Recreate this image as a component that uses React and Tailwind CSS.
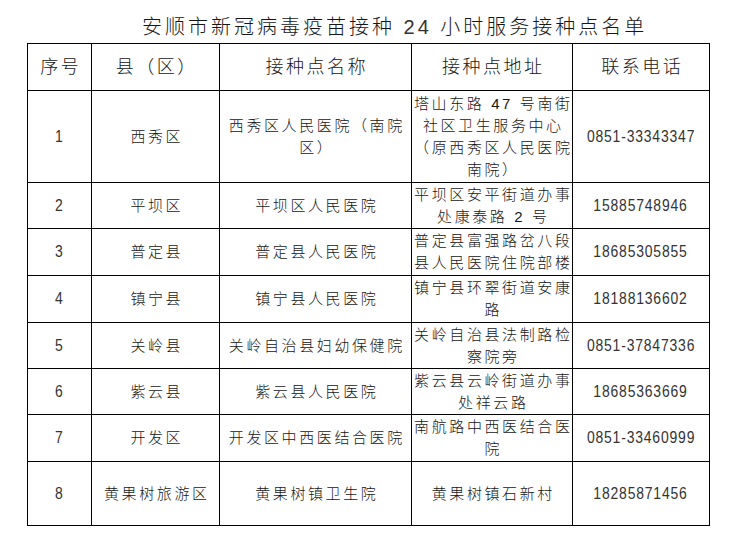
import React from "react";

const rows = [
  { n: "1", county: ["西秀区"], site: ["西秀区人民医院（南院", "区）"], addr: ["塔山东路 47 号南街", "社区卫生服务中心", "（原西秀区人民医院", "南院）"], tel: "0851-33343347" },
  { n: "2", county: ["平坝区"], site: ["平坝区人民医院"], addr: ["平坝区安平街道办事", "处康泰路 2 号"], tel: "15885748946" },
  { n: "3", county: ["普定县"], site: ["普定县人民医院"], addr: ["普定县富强路岔八段", "县人民医院住院部楼"], tel: "18685305855" },
  { n: "4", county: ["镇宁县"], site: ["镇宁县人民医院"], addr: ["镇宁县环翠街道安康", "路"], tel: "18188136602" },
  { n: "5", county: ["关岭县"], site: ["关岭自治县妇幼保健院"], addr: ["关岭自治县法制路检", "察院旁"], tel: "0851-37847336" },
  { n: "6", county: ["紫云县"], site: ["紫云县人民医院"], addr: ["紫云县云岭街道办事", "处祥云路"], tel: "18685363669" },
  { n: "7", county: ["开发区"], site: ["开发区中西医结合医院"], addr: ["南航路中西医结合医", "院"], tel: "0851-33460999" },
  { n: "8", county: ["黄果树旅游区"], site: ["黄果树镇卫生院"], addr: ["黄果树镇石新村"], tel: "18285871456" },
];

const cell = "flex flex-col items-center justify-center text-center border-r border-b border-black";

function Lines({ lines }) {
  return lines.map((l, i) => (
    <div key={i} className="whitespace-nowrap leading-[22px] text-[15px] tracking-[2.6px] pl-[2.6px]">
      {l}
    </div>
  ));
}

function Num({ v }) {
  return (
    <span className="inline-block scale-x-[0.82] text-[17px] tracking-[1px] leading-[22px] whitespace-nowrap text-[#333]">
      {v}
    </span>
  );
}

function Head({ t }) {
  return <div className="whitespace-nowrap text-[18px] tracking-[2.5px] pl-[2.5px] leading-[24px]">{t}</div>;
}

export default function App() {
  return (
    <div className="w-[740px] h-[554px] bg-white text-[#161616] font-['Liberation_Sans','Noto_Sans_CJK_SC',sans-serif] font-light">
      <div className="h-[43px] pt-[15px] pl-[142px]">
        <div className="whitespace-nowrap text-[20px] leading-[24px] tracking-[3px]">
          安顺市新冠病毒疫苗接种<span className="text-[#333]"> 24 </span>小时服务接种点名单
        </div>
      </div>
      <div className="ml-[27px] w-[683px] grid grid-cols-[64px_128px_192px_161px_137px] grid-rows-[47px_92px_46px_47px_47px_46px_46px_47px_64px] border-l border-t border-black">
        <div className={cell}><Head t="序号" /></div>
        <div className={cell}><Head t="县（区）" /></div>
        <div className={cell}><Head t="接种点名称" /></div>
        <div className={cell}><Head t="接种点地址" /></div>
        <div className={cell}><Head t="联系电话" /></div>
        {rows.map((r) => (
          <React.Fragment key={r.n}>
            <div className={cell}><Num v={r.n} /></div>
            <div className={cell}><Lines lines={r.county} /></div>
            <div className={cell}><Lines lines={r.site} /></div>
            <div className={cell}><Lines lines={r.addr} /></div>
            <div className={cell}><Num v={r.tel} /></div>
          </React.Fragment>
        ))}
      </div>
    </div>
  );
}
